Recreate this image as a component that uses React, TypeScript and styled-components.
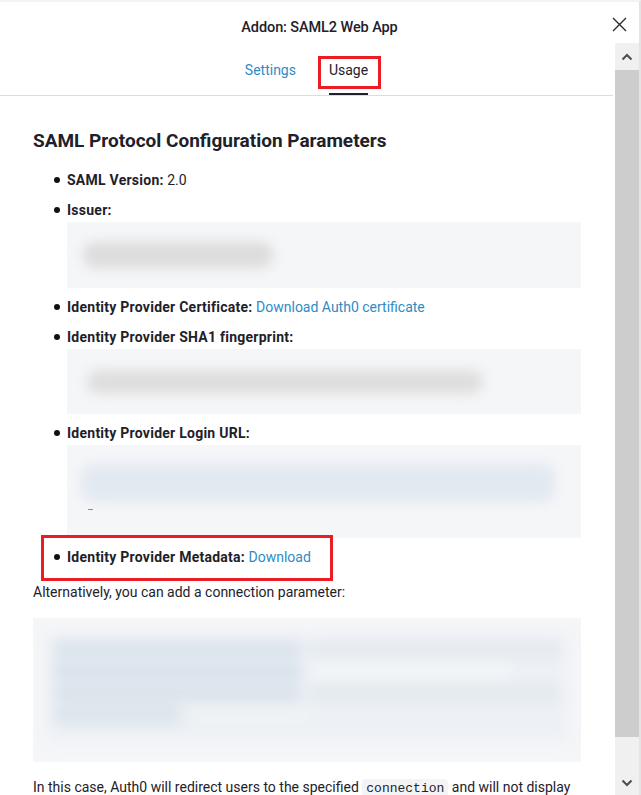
import React from "react";
import styled, { createGlobalStyle } from "styled-components";

const GlobalStyle = createGlobalStyle`
  html, body { margin: 0; padding: 0; background: #ffffff; }
  body { font-family: Roboto, "Liberation Sans", Arial, sans-serif; color: #1e212a; }
  *, *::before, *::after { box-sizing: border-box; }
`;

const Page = styled.div`
  width: 641px;
  height: 795px;
  display: flex;
  flex-direction: column;
  background: #fff;
  border-top: 2px solid #f3f3f3;
  border-right: 2px solid #e4e4e4;
  overflow: hidden;
`;

const Header = styled.header`
  height: 41px;
  padding-top: 9px;
  display: grid;
  grid-template-columns: 1fr auto 1fr;
  align-items: center;
`;

const Title = styled.h1`
  grid-column: 2;
  margin: 0;
  font-size: 14.5px;
  font-weight: 500;
  color: #1e212a;
  letter-spacing: -0.1px;
`;

const CloseButton = styled.button`
  grid-column: 3;
  justify-self: end;
  margin-right: 10px;
  margin-top: -6px;
  width: 20px;
  height: 20px;
  padding: 0;
  border: 0;
  background: transparent;
  display: flex;
  align-items: center;
  justify-content: center;
  color: #2b2b2b;
`;

const Body = styled.div`
  flex: 1;
  display: flex;
  min-height: 0;
`;

const Scroller = styled.div`
  flex: 1;
  overflow: hidden;
`;

const TabBar = styled.nav`
  display: flex;
  justify-content: center;
  gap: 33px;
  border-bottom: 1px solid #dcdcdc;
  margin-right: 2px;
`;

const Tab = styled.span<{ $active?: boolean; $marked?: boolean }>`
  position: relative;
  padding: 17px 0 15px;
  line-height: 20px;
  font-size: 14px;
  color: ${(p) => (p.$active ? "#1e212a" : "#2f8bc6")};
  box-shadow: ${(p) => (p.$active ? "inset 0 -2px 0 #1e212a" : "none")};
  ${(p) =>
    p.$marked
      ? `&::after {
    content: "";
    position: absolute;
    top: 13px;
    left: -11px;
    right: -13px;
    height: 33px;
    border: 3px solid #ec1c24;
  }`
      : ""}
`;

const Content = styled.div`
  padding: 0 34px 0 33px;
  font-size: 14px;
  line-height: 22px;
`;

const Heading = styled.h2`
  margin: 33px 0 16px;
  font-size: 19px;
  line-height: 24px;
  font-weight: 700;
`;

const List = styled.ul`
  margin: 0 0 13px;
  padding-left: 34px;
  list-style: none;
`;

const Item = styled.li<{ $marked?: boolean }>`
  position: relative;
  margin-bottom: 8px;
  &::before {
    content: "";
    position: absolute;
    left: -13px;
    top: 8px;
    width: 6px;
    height: 6px;
    border-radius: 50%;
    background: #111;
  }
  ${(p) =>
    p.$marked
      ? `&::after {
    content: "";
    position: absolute;
    top: -11px;
    left: -26px;
    width: 292px;
    height: 46px;
    border: 3px solid #ec1c24;
  }`
      : ""}
`;

const Label = styled.strong`
  font-weight: 700;
  letter-spacing: 0.25px;
`;

const Link = styled.a`
  color: #2f8bc6;
  text-decoration: none;
`;

const CodeBox = styled.div<{ $pad: string; $h?: number; $mt?: number }>`
  margin-top: ${(p) => p.$mt ?? 0}px;
  background: #f5f6f8;
  padding: ${(p) => p.$pad};
  ${(p) => (p.$h ? `height: ${p.$h}px;` : "")}
`;

const Redacted = styled.div<{ $w: number; $h: number; $c: string; $ml?: number }>`
  width: ${(p) => p.$w}px;
  height: ${(p) => p.$h}px;
  margin-left: ${(p) => p.$ml ?? 0}px;
  background: ${(p) => p.$c};
  border-radius: 12px;
  filter: blur(6px);
`;

const Dash = styled.div`
  width: 5px;
  height: 1px;
  margin: 7px 0 0 7px;
  background: #6a8fb0;
`;

const Paragraph = styled.p<{ $mt?: number }>`
  margin: ${(p) => p.$mt ?? 0}px 0 15px;
`;

const BlurBlock = styled.div`
  display: flex;
  flex-direction: column;
  gap: 4px;
  height: 108px;
  padding: 6px 4px;
  background: #edf1f5;
  filter: blur(7px);
`;

const BlurRow = styled.div`
  display: flex;
  gap: 8px;
  height: 18px;
`;

const BlurSeg = styled.div<{ $w: number; $c: string }>`
  width: ${(p) => p.$w}px;
  background: ${(p) => p.$c};
  border-radius: 6px;
`;

const Code = styled.code`
  font-family: "Liberation Mono", "DejaVu Sans Mono", monospace;
  font-size: 13px;
  background: #f3f4f6;
  padding: 2px 4px;
  border-radius: 4px;
`;

const ScrollBar = styled.div`
  width: 24px;
  background: #f0f0f0;
  display: flex;
  flex-direction: column;
`;

const ScrollButton = styled.div<{ $h: number }>`
  height: ${(p) => p.$h}px;
  display: flex;
  align-items: center;
  justify-content: center;
  color: #505050;
`;

const Thumb = styled.div`
  height: 667px;
  background: #cdcdcd;
`;

const Spacer = styled.div`
  flex: 1;
`;

const Chevron = ({ up }: { up?: boolean }) => (
  <svg width="12" height="8" viewBox="0 0 12 8">
    <polyline
      points={up ? "1.5,6.5 6,2 10.5,6.5" : "1.5,1.5 6,6 10.5,1.5"}
      fill="none"
      stroke="currentColor"
      strokeWidth="2.2"
    />
  </svg>
);

const CloseIcon = () => (
  <svg width="15" height="15" viewBox="0 0 15 15">
    <path d="M1 1 L14 14 M14 1 L1 14" stroke="currentColor" strokeWidth="1.4" fill="none" />
  </svg>
);

export default function App() {
  return (
    <>
      <GlobalStyle />
      <Page>
        <Header>
          <Title>Addon: SAML2 Web App</Title>
          <CloseButton aria-label="Close">
            <CloseIcon />
          </CloseButton>
        </Header>
        <Body>
          <Scroller>
            <TabBar>
              <Tab>Settings</Tab>
              <Tab $active $marked>
                Usage
              </Tab>
            </TabBar>
            <Content>
              <Heading>SAML Protocol Configuration Parameters</Heading>
              <List>
                <Item>
                  <Label>SAML Version:</Label> 2.0
                </Item>
                <Item>
                  <Label>Issuer:</Label>
                  <CodeBox $pad="20px 16px" $mt={1}>
                    <Redacted $w={190} $h={26} $c="#dcdcdc" />
                  </CodeBox>
                </Item>
                <Item>
                  <Label>Identity Provider Certificate:</Label> <Link>Download Auth0 certificate</Link>
                </Item>
                <Item>
                  <Label>Identity Provider SHA1 fingerprint:</Label>
                  <CodeBox $pad="21px 16px 20px" $mt={1}>
                    <Redacted $w={396} $h={24} $c="#dedede" $ml={4} />
                  </CodeBox>
                </Item>
                <Item>
                  <Label>Identity Provider Login URL:</Label>
                  <CodeBox $pad="19px 14px 0" $h={93} $mt={1}>
                    <Redacted $w={474} $h={38} $c="#e2e9f0" />
                    <Dash />
                  </CodeBox>
                </Item>
                <Item $marked>
                  <Label>Identity Provider Metadata:</Label> <Link>Download</Link>
                </Item>
              </List>
              <Paragraph>Alternatively, you can add a connection parameter:</Paragraph>
              <CodeBox $pad="16px 11px 20px 15px">
                <BlurBlock>
                  <BlurRow>
                    <BlurSeg $w={250} $c="#dbe4ec" />
                    <BlurSeg $w={250} $c="#e4eaf0" />
                  </BlurRow>
                  <BlurRow>
                    <BlurSeg $w={250} $c="#d8e2eb" />
                    <BlurSeg $w={200} $c="#f3f5f8" />
                  </BlurRow>
                  <BlurRow>
                    <BlurSeg $w={250} $c="#dae3eb" />
                    <BlurSeg $w={250} $c="#e3e9ef" />
                  </BlurRow>
                  <BlurRow>
                    <BlurSeg $w={130} $c="#dbe4ec" />
                    <BlurSeg $w={120} $c="#eef2f5" />
                  </BlurRow>
                </BlurBlock>
              </CodeBox>
              <Paragraph $mt={14}>
                In this case, Auth0 will redirect users to the specified <Code>connection</Code> and will not display
              </Paragraph>
            </Content>
          </Scroller>
          <ScrollBar>
            <ScrollButton $h={27}>
              <Chevron up />
            </ScrollButton>
            <Thumb />
            <Spacer />
            <ScrollButton $h={25}>
              <Chevron />
            </ScrollButton>
          </ScrollBar>
        </Body>
      </Page>
    </>
  );
}
